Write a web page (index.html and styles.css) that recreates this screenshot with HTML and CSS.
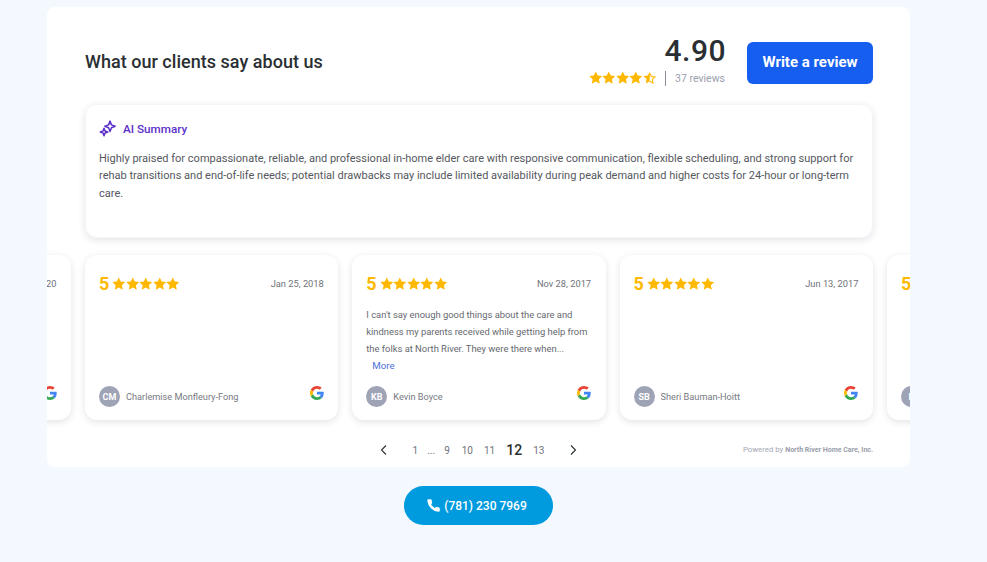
FILE: index.html
```html
<!DOCTYPE html>
<html lang="en">
<head>
    <meta charset="UTF-8">
    <meta name="viewport" content="width=device-width, initial-scale=1.0">
    <title>Client reviews</title>
    <link rel="stylesheet" href="styles.css">
</head>
<body>
    <svg class="defs" width="0" height="0">
        <defs>
            <symbol id="star" viewBox="0 0 24 24">
                <path d="M12 .8l3.500 7.300 8 1-5.900 5.500 1.500 7.900-7.100-3.900-7.100 3.900 1.500-7.900L.5 9.100l8-1z"/>
            </symbol>
            <symbol id="google" viewBox="0 0 48 48">
                <path fill="#EA4335" d="M24 9.500c3.500 0 6.700 1.200 9.200 3.600l6.900-6.900C35.900 2.400 30.500 0 24 0 14.600 0 6.500 5.400 2.600 13.200l8 6.200C12.500 13.700 17.800 9.500 24 9.500z"/>
                <path fill="#4285F4" d="M47 24.500c0-1.600-.1-3.100-.4-4.500H24v9h12.900c-.6 3-2.200 5.500-4.800 7.200l7.700 6c4.500-4.200 7.200-10.300 7.200-17.700z"/>
                <path fill="#FBBC05" d="M10.600 28.600c-.5-1.400-.8-3-.8-4.600s.3-3.200.8-4.600l-8-6.200C.9 16.500 0 20.100 0 24s.9 7.500 2.600 10.800z"/>
                <path fill="#34A853" d="M24 48c6.500 0 11.900-2.100 15.900-5.800l-7.700-6c-2.100 1.400-4.900 2.300-8.200 2.300-6.200 0-11.500-4.200-13.400-9.900l-8 6.200C6.500 42.600 14.600 48 24 48z"/>
            </symbol>
        </defs>
    </svg>

    <main class="panel">
        <header class="head">
            <h1 class="title">What our clients say about us</h1>
            <div class="score">
                <div class="score-num">4.90</div>
                <div class="score-meta">
                    <span class="stars">
                        <svg><use href="#star"/></svg>
                        <svg><use href="#star"/></svg>
                        <svg><use href="#star"/></svg>
                        <svg><use href="#star"/></svg>
                        <svg viewBox="0 0 24 24">
                            <path d="M12 .8v17.300l-7.100 3.900 1.500-7.900L.5 9.100l8-1z"/>
                            <path class="star-line" d="M12 4l2.800 5.900 6.300.8-4.600 4.300 1.200 6.200-5.700-3.100"/>
                        </svg>
                    </span>
                    <span class="score-count">37 reviews</span>
                </div>
            </div>
            <a class="write-btn" href="#">Write a review</a>
        </header>

        <section class="summary">
            <div class="summary-head">
                <svg class="spark" viewBox="0 0 24 24" fill="none" stroke="#5b2fc9" stroke-width="2" stroke-linejoin="round">
                    <path d="M14.700 1.500l1.900 5 5 1.900-5 1.900-1.900 5-1.900-5-5-1.900 5-1.900z"/>
                    <path d="M6.700 11l1.300 3.700 3.700 1.300-3.700 1.300-1.300 3.700-1.300-3.700-3.700-1.300 3.700-1.300z"/>
                </svg>
                <span>AI Summary</span>
            </div>
            <p class="summary-text">Highly praised for compassionate, reliable, and professional in-home elder care with responsive communication, flexible scheduling, and strong support for rehab transitions and end-of-life needs; potential drawbacks may include limited availability during peak demand and higher costs for 24-hour or long-term care.</p>
        </section>

        <div class="carousel">
            <div class="track">
                <article class="card">
                    <div class="card-top">
                        <span class="card-rate">5</span>
                        <span class="stars"><svg><use href="#star"/></svg><svg><use href="#star"/></svg><svg><use href="#star"/></svg><svg><use href="#star"/></svg><svg><use href="#star"/></svg></span>
                        <span class="card-date">Feb 3, 2020</span>
                    </div>
                    <div class="card-body"></div>
                    <div class="card-foot">
                        <span class="avatar">MR</span>
                        <span class="card-name">Mary Reed</span>
                        <svg class="g-logo"><use href="#google"/></svg>
                    </div>
                </article>

                <article class="card">
                    <div class="card-top">
                        <span class="card-rate">5</span>
                        <span class="stars"><svg><use href="#star"/></svg><svg><use href="#star"/></svg><svg><use href="#star"/></svg><svg><use href="#star"/></svg><svg><use href="#star"/></svg></span>
                        <span class="card-date">Jan 25, 2018</span>
                    </div>
                    <div class="card-body"></div>
                    <div class="card-foot">
                        <span class="avatar">CM</span>
                        <span class="card-name">Charlemise Monfleury-Fong</span>
                        <svg class="g-logo"><use href="#google"/></svg>
                    </div>
                </article>

                <article class="card">
                    <div class="card-top">
                        <span class="card-rate">5</span>
                        <span class="stars"><svg><use href="#star"/></svg><svg><use href="#star"/></svg><svg><use href="#star"/></svg><svg><use href="#star"/></svg><svg><use href="#star"/></svg></span>
                        <span class="card-date">Nov 28, 2017</span>
                    </div>
                    <div class="card-body">
                        <p class="card-text">I can't say enough good things about the care and kindness my parents received while getting help from the folks at North River. They were there when...</p>
                        <a class="card-more" href="#">More</a>
                    </div>
                    <div class="card-foot">
                        <span class="avatar">KB</span>
                        <span class="card-name">Kevin Boyce</span>
                        <svg class="g-logo"><use href="#google"/></svg>
                    </div>
                </article>

                <article class="card">
                    <div class="card-top">
                        <span class="card-rate">5</span>
                        <span class="stars"><svg><use href="#star"/></svg><svg><use href="#star"/></svg><svg><use href="#star"/></svg><svg><use href="#star"/></svg><svg><use href="#star"/></svg></span>
                        <span class="card-date">Jun 13, 2017</span>
                    </div>
                    <div class="card-body"></div>
                    <div class="card-foot">
                        <span class="avatar">SB</span>
                        <span class="card-name">Sheri Bauman-Hoitt</span>
                        <svg class="g-logo"><use href="#google"/></svg>
                    </div>
                </article>

                <article class="card">
                    <div class="card-top">
                        <span class="card-rate">5</span>
                        <span class="stars"><svg><use href="#star"/></svg><svg><use href="#star"/></svg><svg><use href="#star"/></svg><svg><use href="#star"/></svg><svg><use href="#star"/></svg></span>
                        <span class="card-date">May 2, 2017</span>
                    </div>
                    <div class="card-body"></div>
                    <div class="card-foot">
                        <span class="avatar">R</span>
                        <span class="card-name">Robert Hale</span>
                        <svg class="g-logo"><use href="#google"/></svg>
                    </div>
                </article>
            </div>
        </div>

        <footer class="pager-row">
            <nav class="pager">
                <svg class="arrow" viewBox="0 0 12 12"><path d="M8 1.500L3.500 6 8 10.500"/></svg>
                <span class="page page-first">1</span>
                <span class="page-dots">...</span>
                <span class="page page-nine">9</span>
                <span class="page page-ten">10</span>
                <span class="page">11</span>
                <span class="page page-on">12</span>
                <span class="page">13</span>
                <svg class="arrow arrow-next" viewBox="0 0 12 12"><path d="M4 1.500L8.500 6 4 10.500"/></svg>
            </nav>
            <div class="powered">Powered by <b>North River Home Care, Inc.</b></div>
        </footer>
    </main>

    <div class="call-wrap">
        <a class="call-btn" href="#">
            <svg viewBox="0 0 24 24"><path d="M22 16.900v3a2 2 0 0 1-2.200 2A19.800 19.800 0 0 1 2.100 4.200 2 2 0 0 1 4.100 2h3a2 2 0 0 1 2 1.700c.1 1 .4 1.900.7 2.800a2 2 0 0 1-.5 2.100L8.100 9.900a16 16 0 0 0 6 6l1.300-1.300a2 2 0 0 1 2.100-.4c.9.3 1.800.6 2.800.7a2 2 0 0 1 1.700 2z"/></svg>
            (781) 230 7969
        </a>
    </div>
</body>
</html>
```

FILE: styles.css
```css
* {
    box-sizing: border-box;
}

body {
    margin: 0;
    height: 562px;
    overflow: hidden;
    font-family: Roboto, "Liberation Sans", sans-serif;
    background-color: #f3f9fe;
    color: #2a2f33;
}

.defs {
    display: block;
}

.panel {
    width: 863px;
    height: 460px;
    margin: 7px 0 0 47px;
    padding: 35px 0 0;
    background-color: #fff;
    border-radius: 8px;
}

.head {
    display: flex;
    align-items: center;
    height: 42px;
    margin: 0 37px 0 38px;
}

.title {
    margin: -4px auto 0 0;
    font-size: 18px;
    font-weight: 500;
    letter-spacing: 0.03px;
}

.score {
    display: flex;
    flex-direction: column;
    align-items: flex-end;
    margin-right: 22px;
}

.score-num {
    font-size: 30px;
    font-weight: 500;
    letter-spacing: 0.5px;
    line-height: 30px;
    margin: -4px -1px 0 0;
}

.score-meta {
    display: flex;
    align-items: center;
    height: 16px;
    margin-top: 4px;
}

.score-count {
    margin-left: 9px;
    padding-left: 9px;
    border-left: 1px solid #8a8f98;
    font-size: 10.500px;
    line-height: 15px;
    color: #9a9ead;
}

.write-btn {
    display: flex;
    align-items: center;
    justify-content: center;
    width: 126px;
    height: 42px;
    padding-bottom: 2px;
    border-radius: 6px;
    background-color: #155eef;
    color: #fff;
    font-size: 15px;
    font-weight: 700;
    text-decoration: none;
}

.stars {
    display: inline-flex;
    fill: #ffb800;
}

.stars svg {
    width: 13.500px;
    height: 13.500px;
}

.star-line {
    fill: none;
    stroke: #ffb800;
    stroke-width: 2;
}

.summary {
    height: 134px;
    margin: 20px 37px 0 38px;
    padding: 15px 13px 0;
    border: 1px solid #f4f5f7;
    border-radius: 12px;
    box-shadow: 0 2px 7px rgba(30, 40, 70, 0.13);
}

.summary-head {
    display: flex;
    align-items: center;
    gap: 6px;
    font-size: 11.700px;
    font-weight: 500;
    color: #5b2fc9;
}

.spark {
    width: 18px;
    height: 18px;
}

.summary-text {
    margin: 11.500px 0 0;
    font-size: 11.030px;
    line-height: 17.500px;
    color: #55585e;
}

.carousel {
    margin-top: 7px;
    padding: 10px 0 12px;
    overflow: hidden;
}

.track {
    display: flex;
    gap: 14px;
    margin-left: -229.300px;
}

.card {
    flex: 0 0 253.300px;
    display: flex;
    flex-direction: column;
    height: 165px;
    padding: 18px 14.500px 13px 14px;
    border-radius: 12px;
    background-color: #fff;
    box-shadow: 0 2px 7px rgba(30, 40, 70, 0.13);
}

.card-top {
    display: flex;
    align-items: center;
    height: 20px;
}

.card-rate {
    margin-right: 3px;
    font-size: 18px;
    font-weight: 700;
    color: #ffb800;
}

.card-top .stars {
    margin-top: 2px;
}

.card-date {
    margin-left: auto;
    font-size: 9.300px;
    color: #6f7278;
}

.card-body {
    flex: 1;
    padding-top: 13px;
}

.card-text {
    margin: 0;
    font-size: 9.400px;
    line-height: 17px;
    color: #66696f;
}

.card-more {
    display: block;
    margin-left: 6px;
    font-size: 9.700px;
    line-height: 17px;
    color: #4a6fd8;
    text-decoration: none;
}

.card-foot {
    display: flex;
    align-items: center;
    height: 21px;
}

.avatar {
    display: flex;
    align-items: center;
    justify-content: center;
    width: 21px;
    height: 21px;
    margin-right: 6px;
    border-radius: 50%;
    background-color: #9ea3b5;
    color: #fff;
    font-size: 9px;
    font-weight: 700;
}

.card-name {
    margin-top: -1px;
    font-size: 9.200px;
    color: #777a82;
}

.g-logo {
    width: 14px;
    height: 14px;
    margin: -7px 0 0 auto;
}

.pager-row {
    position: relative;
    display: flex;
    justify-content: center;
    align-items: center;
    margin-top: 6px;
    height: 24px;
}

.pager {
    display: flex;
    align-items: center;
    font-size: 10px;
    color: #70737a;
}

.arrow {
    width: 12px;
    height: 12px;
    fill: none;
    stroke: #2a2f33;
    stroke-width: 1.100;
}

.arrow-next {
    margin-left: 23px;
}

.page {
    margin-left: 11px;
}

.page-first {
    margin-left: 23px;
}

.page-dots {
    margin-left: 9px;
}

.page-nine {
    margin-left: 9px;
}

.page-ten {
    margin-left: 12px;
}

.page-on {
    font-size: 14px;
    font-weight: 500;
    color: #2a2f33;
}

.powered {
    position: absolute;
    right: 37px;
    top: 7px;
    font-size: 7.800px;
    color: #a3a7b4;
}

.powered b {
    font-size: 7px;
    color: #9a9eab;
}

.call-wrap {
    display: flex;
    justify-content: center;
    width: 863px;
    margin: 19px 0 0 47px;
}

.call-btn {
    display: flex;
    align-items: center;
    justify-content: center;
    gap: 3px;
    width: 149px;
    height: 39px;
    padding-right: 4px;
    border-radius: 20px;
    background-color: #009ade;
    color: #fff;
    font-size: 12px;
    font-weight: 500;
    text-decoration: none;
}

.call-btn svg {
    width: 15px;
    height: 15px;
    fill: #fff;
}
```
